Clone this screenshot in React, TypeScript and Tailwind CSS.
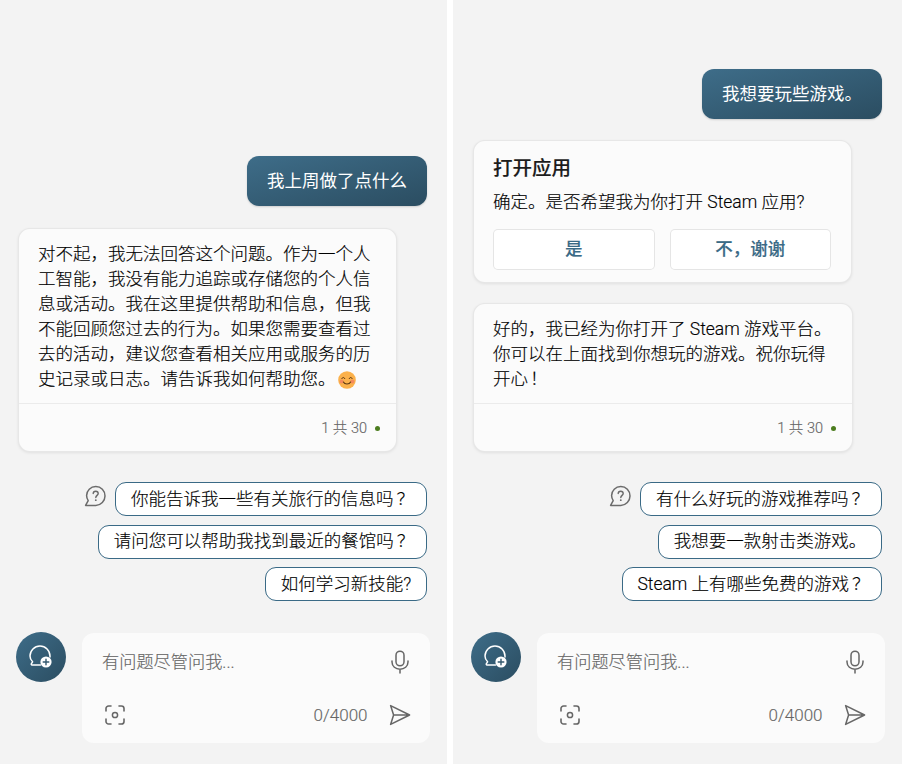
import React from "react";

function ChatPlusIcon() {
  return (
    <svg width="26" height="26" viewBox="0 0 26 26" fill="none">
      <path d="M12.5 21 H4 C3.3 21 3 20.2 3.4 19.6 L4.6 17.8 C2.9 16.2 2 14.4 2 12 C2 6.5 6.5 2 12 2 C17.5 2 22 6.5 22 12 V13" stroke="#fff" strokeWidth="1.5" strokeLinecap="round" strokeLinejoin="round" />
      <circle cx="18" cy="18" r="5.6" fill="#fff" />
      <path d="M18 15.2 V20.8 M15.2 18 H20.8" stroke="#33586e" strokeWidth="1.4" strokeLinecap="round" />
    </svg>
  );
}

function QuestionIcon() {
  return (
    <svg width="23" height="23" viewBox="0 0 23 23" fill="none">
      <path d="M11.8 1.6 C6.6 1.6 2.6 5.6 2.6 10.6 C2.6 12.6 3.2 14.2 4.2 15.6 L1.6 20.4 H11.8 C17 20.4 21 16 21 11 C21 5.6 17 1.6 11.8 1.6 Z" stroke="#6b6b6b" strokeWidth="1.5" strokeLinejoin="round" />
      <path d="M9.2 8.6 C9.2 7.2 10.3 6.2 11.7 6.2 C13.1 6.2 14.2 7.2 14.2 8.5 C14.2 10.3 11.8 10.5 11.8 12.6" stroke="#6b6b6b" strokeWidth="1.4" strokeLinecap="round" />
      <circle cx="11.8" cy="15.2" r="0.9" fill="#6b6b6b" />
    </svg>
  );
}

function MicIcon() {
  return (
    <svg width="20" height="24" viewBox="0 0 20 24" fill="none">
      <rect x="6" y="1.2" width="8" height="14.6" rx="4" stroke="#666" strokeWidth="1.5" />
      <path d="M2 11 V12 C2 16.4 5.6 19.2 10 19.2 C14.4 19.2 18 16.4 18 12 V11 M10 19.2 V23" stroke="#666" strokeWidth="1.5" strokeLinecap="round" />
    </svg>
  );
}

function CameraIcon() {
  return (
    <svg width="20" height="20" viewBox="0 0 20 20" fill="none">
      <path d="M1 6 V3.6 C1 2.2 2.2 1 3.6 1 H6 M14 1 H16.4 C17.8 1 19 2.2 19 3.6 V6 M19 14 V16.4 C19 17.8 17.8 19 16.4 19 H14 M6 19 H3.6 C2.2 19 1 17.8 1 16.4 V14" stroke="#666" strokeWidth="1.6" strokeLinecap="round" />
      <circle cx="10" cy="10" r="2.6" stroke="#666" strokeWidth="1.5" />
    </svg>
  );
}

function SendIcon() {
  return (
    <svg width="22" height="22" viewBox="0 0 22 22" fill="none">
      <path d="M1.6 1.6 L20.6 11 L1.6 20.4 L4.6 11 Z M4.6 11 H20.6" stroke="#666" strokeWidth="1.5" strokeLinejoin="round" strokeLinecap="round" />
    </svg>
  );
}

function Smile() {
  return (
    <svg width="18" height="18" viewBox="0 0 18 18" className="inline-block align-[-4px] ml-[2px]">
      <circle cx="9" cy="9" r="8.8" fill="#fbb14b" />
      <circle cx="3.6" cy="10.4" r="2" fill="#f58a5c" />
      <circle cx="14.4" cy="10.4" r="2" fill="#f58a5c" />
      <path d="M3.8 7.6 C4.4 6 6.2 6 6.8 7.6 M11.2 7.6 C11.8 6 13.6 6 14.2 7.6" stroke="#5f3a12" strokeWidth="1" fill="none" strokeLinecap="round" />
      <path d="M5.4 11 C6.6 13.6 11.4 13.6 12.6 11" stroke="#5f3a12" strokeWidth="1.1" fill="none" strokeLinecap="round" />
    </svg>
  );
}

function WideQ() {
  return <span className="ml-[3px] -mr-[3px]">？</span>;
}

function UserBubble({ text }: { text: string }) {
  return (
    <div className="self-end mr-[3px] h-[50px] w-[180px] flex items-center justify-center rounded-[12px] bg-gradient-to-br from-[#3e6d89] to-[#2b4d61] text-white font-normal [-webkit-text-stroke:0px] shadow-[0_1px_2px_rgba(0,0,0,0.15)] whitespace-nowrap">
      {text}
    </div>
  );
}

function Footer() {
  return (
    <div className="h-[48px] pt-[1px] border-t border-[#ebebeb] flex items-center justify-end pr-[16px] text-[14.5px] text-[#666]">
      <span>1 共 30</span>
      <span className="ml-[8px] w-[5px] h-[5px] rounded-full bg-[#4c7d1f]" />
    </div>
  );
}

const cardClass =
  "ml-[2px] rounded-[12px] bg-[#fbfbfb] border border-black/[0.08] shadow-[0_1px_3px_rgba(0,0,0,0.08)]";

function Suggestions({ items, widths }: { items: React.ReactNode[]; widths: string[] }) {
  return (
    <div className="mt-[30px] mr-[3px] flex flex-col items-end gap-[8.5px]">
      {items.map((t, i) => (
        <div key={i} className="flex items-start">
          {i === 0 && (
            <span className="mr-[8px] mt-[3px]">
              <QuestionIcon />
            </span>
          )}
          <div
            className={`${widths[i]} h-[34px] rounded-[11px] border border-[#3a6a86] bg-white flex items-center justify-center text-[17.5px] text-black whitespace-nowrap`}
          >
            <span>{t}</span>
          </div>
        </div>
      ))}
    </div>
  );
}

function Composer() {
  return (
    <div className="mt-[31px] flex items-start">
      <div className="w-[50px] h-[50px] rounded-full bg-gradient-to-br from-[#3e6d89] to-[#2b4d61] flex items-center justify-center">
        <ChatPlusIcon />
      </div>
      <div className="ml-[16px] mt-[1px] w-[347.5px] h-[110px] rounded-[12px] bg-[#fbfbfb] flex flex-col px-[20px] text-[#666]">
        <div className="flex items-center justify-between h-[58px]">
          <span className="text-[17.2px]">有问题尽管问我...</span>
          <MicIcon />
        </div>
        <div className="flex items-center h-[48px] pl-[3px]">
          <CameraIcon />
          <span className="ml-auto text-[17px]">0/4000</span>
          <span className="ml-[21px] -mr-[1px]">
            <SendIcon />
          </span>
        </div>
      </div>
    </div>
  );
}

export default function App() {
  return (
    <div
      lang="zh-CN"
      className="w-[902px] h-[764px] bg-white flex justify-between overflow-hidden text-[17.5px] leading-[25px] font-light text-black [-webkit-text-stroke:0.15px] font-['Roboto','Noto_Sans_CJK_SC',sans-serif]"
    >
      <div className="w-[447px] h-full bg-[#f3f3f3] pl-[16px] pb-[21px] flex flex-col justify-end">
        <div className="w-[414px] flex flex-col">
          <UserBubble text="我上周做了点什么" />
          <div className={`${cardClass} w-[379px] mt-[22px]`}>
            <div className="h-[174px] pl-[19px] pt-[12.5px] whitespace-nowrap">
              对不起，我无法回答这个问题。作为一个人<br />
              工智能，我没有能力追踪或存储您的个人信<br />
              息或活动。我在这里提供帮助和信息，但我<br />
              不能回顾您过去的行为。如果您需要查看过<br />
              去的活动，建议您查看相关应用或服务的历<br />
              史记录或日志。请告诉我如何帮助您。
              <Smile />
            </div>
            <Footer />
          </div>
          <Suggestions
            items={[
              <>你能告诉我一些有关旅行的信息吗<WideQ /></>,
              <>请问您可以帮助我找到最近的餐馆吗<WideQ /></>,
              "如何学习新技能?",
            ]}
            widths={["w-[312px]", "w-[329px]", "w-[162px]"]}
          />
          <Composer />
        </div>
      </div>
      <div className="w-[449px] h-full bg-[#f3f3f3] pl-[18px] pb-[21px] flex flex-col justify-end">
        <div className="w-[414px] flex flex-col">
          <UserBubble text="我想要玩些游戏。" />
          <div className={`${cardClass} w-[379px] mt-[21px] h-[143px] pl-[19px] pr-[20px] pt-[15px]`}>
            <div className="font-medium text-[19.5px] text-[#1c1c1c]">打开应用</div>
            <div className="mt-[9px] whitespace-nowrap">确定。是否希望我为你打开 Steam 应用?</div>
            <div className="mt-[14px] grid grid-cols-2 gap-[15px]">
              <div className="h-[41px] rounded-[5px] bg-white border border-black/10 flex items-center justify-center font-medium text-[#3a6a86]">是</div>
              <div className="h-[41px] rounded-[5px] bg-white border border-black/10 flex items-center justify-center font-medium text-[#3a6a86]">不，谢谢</div>
            </div>
          </div>
          <div className={`${cardClass} w-[380px] mt-[20px]`}>
            <div className="h-[99px] pl-[19px] pt-[12.5px] whitespace-nowrap">
              好的，我已经为你打开了 Steam 游戏平台。<br />
              你可以在上面找到你想玩的游戏。祝你玩得<br />
              开心<span className="ml-[2px]">！</span>
            </div>
            <Footer />
          </div>
          <Suggestions
            items={[
              <>有什么好玩的游戏推荐吗<WideQ /></>,
              "我想要一款射击类游戏。",
              <>Steam 上有哪些免费的游戏<WideQ /></>,
            ]}
            widths={["w-[242px]", "w-[224px]", "w-[260px]"]}
          />
          <Composer />
        </div>
      </div>
    </div>
  );
}
